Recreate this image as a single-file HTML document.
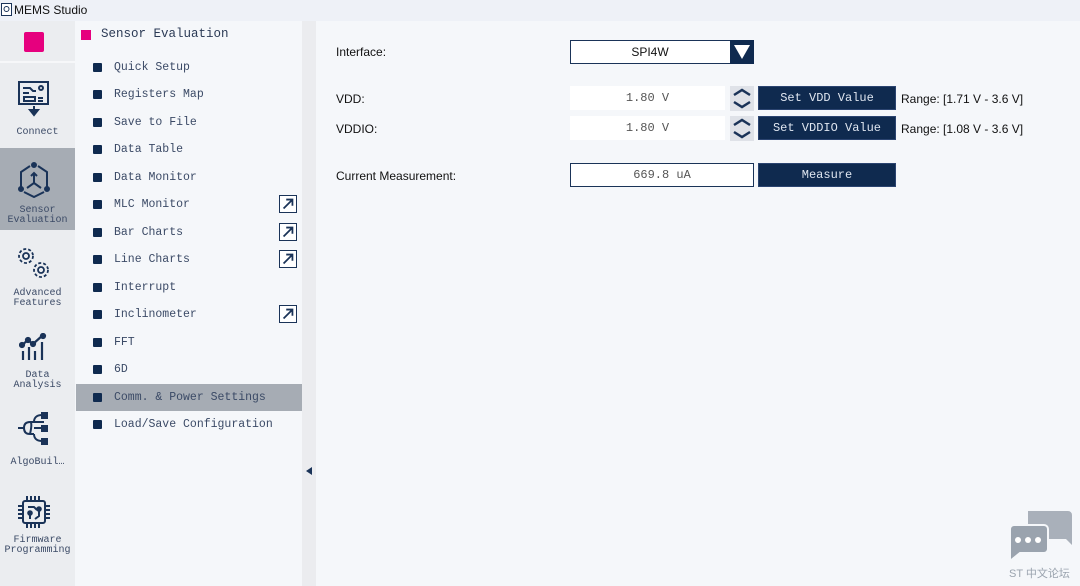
<!DOCTYPE html>
<html><head><meta charset="utf-8"><style>
*{margin:0;padding:0;box-sizing:border-box}
body{width:1080px;height:586px;overflow:hidden;background:#f5f7fa;font-family:"Liberation Sans",sans-serif;position:relative}
.abs{position:absolute}
.title{left:0;top:0;width:1080px;height:21px;background:#eef1f7;font-size:12px;color:#111;}
.rail{left:0;top:21px;width:75px;height:565px;background:#ebedf0}
.mono{font-family:"Liberation Mono","Noto Sans CJK SC",monospace}
.rl{position:absolute;left:0;width:75px;text-align:center;font-size:10px;line-height:10px;color:#3b4a66}
.mid{left:76px;top:21px;width:226px;height:565px;background:#f5f7fa}
.item{position:absolute;left:76px;width:226px;height:27px;font-size:11.5px;color:#3b4a66;line-height:27px}
.item .b{position:absolute;left:17px;top:9px;width:9px;height:9px;background:#0f2a4f;border-radius:1px}
.item span{position:absolute;left:38px}
.ext{position:absolute;left:203px;top:4px;width:18px;height:18px;border:1.5px solid #1a3358;background:#fff}
.div{left:302px;top:21px;width:14px;height:565px;background:#ebecef}
.lab{position:absolute;font-size:12px;color:#111}
.inp{position:absolute;background:#fff;font-size:12px;color:#555;text-align:center}
.btn{position:absolute;background:#0f2a4f;color:#dfe6f0;font-size:12px;text-align:center;border:1px solid #2b4470}
</style></head><body>
<div class="abs title"><svg class="abs" style="left:1px;top:3px" width="11" height="13"><rect x="0.5" y="0.5" width="10" height="12" fill="#fff" stroke="#1a3358"/><circle cx="5.5" cy="6" r="2.5" fill="none" stroke="#1a3358"/></svg><span class="abs" style="left:14px;top:3px">MEMS Studio</span></div>
<div class="abs rail"></div>
<div class="abs" style="left:0;top:61px;width:75px;height:2px;background:#f6f7f9"></div>
<div class="abs" style="left:24px;top:32px;width:20px;height:20px;background:#e6007e;border-radius:2px"></div>
<svg class="abs" style="left:17px;top:80px" width="34" height="38" viewBox="0 0 34 38" fill="none" stroke="#1a3358" stroke-width="2"><rect x="2" y="2" width="29" height="22"/><path d="M6 8h7l3 3h3M6 13h6M7 17h11v4H7zM21 18h5M21 21h5"/><circle cx="24" cy="8" r="2"/><path d="M17 26v6" /><path d="M13 30l4 5 4-5z" fill="#1a3358"/></svg>
<div class="rl mono" style="top:128px">Connect</div>
<div class="abs" style="left:0;top:148px;width:75px;height:82px;background:#a6acb4"></div>
<svg class="abs" style="left:16px;top:162px" width="36" height="36" viewBox="0 0 36 36" fill="none" stroke="#1a3358" stroke-width="2"><path d="M14 4L5 10v15M22 4l9 6v15M8 30l10 5 10-5"/><path d="M18 12v9l-7 5M18 21l7 5"/><circle cx="18" cy="3" r="2" fill="#1a3358"/><circle cx="5" cy="27" r="2" fill="#1a3358"/><circle cx="31" cy="27" r="2" fill="#1a3358"/><path d="M15 14l3-3 3 3" /></svg>
<div class="rl mono" style="top:206px">Sensor<br>Evaluation</div>
<svg class="abs" style="left:15px;top:246px" width="36" height="34" viewBox="0 0 36 34" fill="none" stroke="#1a3358" stroke-width="1.8"><circle cx="11" cy="10" r="7" stroke-dasharray="3 2"/><circle cx="11" cy="10" r="3"/><circle cx="26" cy="24" r="7" stroke-dasharray="3 2"/><circle cx="26" cy="24" r="3"/></svg>
<div class="rl mono" style="top:289px">Advanced<br>Features</div>
<svg class="abs" style="left:19px;top:333px" width="30" height="30" viewBox="0 0 30 30" fill="none" stroke="#1a3358" stroke-width="2.2"><path d="M3 12l6-5 5 4 10-9"/><circle cx="3" cy="12" r="2" fill="#1a3358"/><circle cx="9" cy="7" r="2" fill="#1a3358"/><circle cx="14" cy="11" r="2" fill="#1a3358"/><circle cx="24" cy="3" r="2" fill="#1a3358"/><path d="M4 18v9M10 14v13M16 18v9M23 9v18"/></svg>
<div class="rl mono" style="top:371px">Data<br>Analysis</div>
<svg class="abs" style="left:16px;top:411px" width="36" height="36" viewBox="0 0 36 36" fill="none" stroke="#1a3358" stroke-width="2"><path d="M2 17h6M8 17c0-5 3-6 6-6s0 12 0 12c-3 0-6-1-6-6M14 11h4M14 23h4M18 11c0-6 5-7 8-7M18 11v0h10M18 23c0 6 5 7 8 7M18 17h10"/><rect x="26" y="2" width="5" height="5" fill="#1a3358"/><rect x="26" y="15" width="5" height="5" fill="#1a3358"/><rect x="26" y="28" width="5" height="5" fill="#1a3358"/></svg>
<div class="rl mono" style="top:458px">AlgoBuil…</div>
<svg class="abs" style="left:17px;top:495px" width="34" height="34" viewBox="0 0 34 34" fill="none" stroke="#1a3358" stroke-width="2"><rect x="6" y="6" width="22" height="22" rx="2"/><path d="M10 1v5M14 1v5M18 1v5M22 1v5M10 28v5M14 28v5M18 28v5M22 28v5M1 11h5M1 15h5M1 19h5M1 23h5M28 11h5M28 15h5M28 19h5M28 23h5M11 12h6l3 3M13 18v6M22 14v7l-4 3"/><circle cx="13" cy="18" r="1.8" fill="#1a3358"/><circle cx="22" cy="14" r="1.8" fill="#1a3358"/></svg>
<div class="rl mono" style="top:536px">Firmware<br>Programming</div>
<div class="abs mid"></div>
<div class="abs" style="left:81px;top:30px;width:10px;height:10px;background:#e6007e"></div>
<div class="abs mono" style="left:101px;top:27px;font-size:12.5px;color:#2b3a55">Sensor Evaluation</div>
<div class="item mono" style="top:54px"><i class="b"></i><span>Quick Setup</span></div>
<div class="item mono" style="top:81px"><i class="b"></i><span>Registers Map</span></div>
<div class="item mono" style="top:109px"><i class="b"></i><span>Save to File</span></div>
<div class="item mono" style="top:136px"><i class="b"></i><span>Data Table</span></div>
<div class="item mono" style="top:164px"><i class="b"></i><span>Data Monitor</span></div>
<div class="item mono" style="top:191px"><i class="b"></i><span>MLC Monitor</span><svg class="ext" viewBox="0 0 18 18"><path d="M4 14L13 5M7 4h7v7" stroke="#1a3358" stroke-width="2" fill="none"/></svg></div>
<div class="item mono" style="top:219px"><i class="b"></i><span>Bar Charts</span><svg class="ext" viewBox="0 0 18 18"><path d="M4 14L13 5M7 4h7v7" stroke="#1a3358" stroke-width="2" fill="none"/></svg></div>
<div class="item mono" style="top:246px"><i class="b"></i><span>Line Charts</span><svg class="ext" viewBox="0 0 18 18"><path d="M4 14L13 5M7 4h7v7" stroke="#1a3358" stroke-width="2" fill="none"/></svg></div>
<div class="item mono" style="top:274px"><i class="b"></i><span>Interrupt</span></div>
<div class="item mono" style="top:301px"><i class="b"></i><span>Inclinometer</span><svg class="ext" viewBox="0 0 18 18"><path d="M4 14L13 5M7 4h7v7" stroke="#1a3358" stroke-width="2" fill="none"/></svg></div>
<div class="item mono" style="top:329px"><i class="b"></i><span>FFT</span></div>
<div class="item mono" style="top:356px"><i class="b"></i><span>6D</span></div>
<div class="item mono" style="top:384px;background:#a6acb4"><i class="b"></i><span>Comm. &amp; Power Settings</span></div>
<div class="item mono" style="top:411px"><i class="b"></i><span>Load/Save Configuration</span></div>
<div class="abs div"></div>
<div class="abs" style="left:306px;top:467px;width:0;height:0;border-top:4px solid transparent;border-bottom:4px solid transparent;border-right:6px solid #1a3358"></div>

<div class="lab" style="left:336px;top:45px">Interface:</div>
<div class="abs" style="left:570px;top:40px;width:184px;height:24px;background:#fff;border:1px solid #1a3358"></div>
<div class="abs" style="left:570px;top:45px;width:160px;text-align:center;font-size:12px;color:#111">SPI4W</div>
<div class="abs" style="left:730px;top:40px;width:24px;height:24px;background:#0f2a4f"></div>
<div class="abs" style="left:734px;top:45px;border-left:8px solid transparent;border-right:8px solid transparent;border-top:14px solid #fff"></div>

<div class="lab" style="left:336px;top:92px">VDD:</div>
<div class="inp mono" style="left:570px;top:86px;width:155px;height:24px;line-height:24px">1.80 V</div>
<svg class="abs" style="left:730px;top:86px" width="24" height="25"><rect width="24" height="25" fill="#dfe2e8"/><path d="M4 9l8-5 8 5M4 16l8 5 8-5" stroke="#1a3358" stroke-width="2.5" fill="none"/></svg>
<div class="btn mono" style="left:758px;top:86px;width:138px;height:24px;line-height:22px">Set VDD Value</div>
<div class="lab" style="left:901px;top:92px">Range: [1.71 V - 3.6 V]</div>

<div class="lab" style="left:336px;top:122px">VDDIO:</div>
<div class="inp mono" style="left:570px;top:116px;width:155px;height:24px;line-height:24px">1.80 V</div>
<svg class="abs" style="left:730px;top:116px" width="24" height="25"><rect width="24" height="25" fill="#dfe2e8"/><path d="M4 9l8-5 8 5M4 16l8 5 8-5" stroke="#1a3358" stroke-width="2.5" fill="none"/></svg>
<div class="btn mono" style="left:758px;top:116px;width:138px;height:24px;line-height:22px">Set VDDIO Value</div>
<div class="lab" style="left:901px;top:122px">Range: [1.08 V - 3.6 V]</div>

<div class="lab" style="left:336px;top:169px">Current Measurement:</div>
<div class="inp mono" style="left:570px;top:163px;width:184px;height:24px;line-height:22px;border:1px solid #1a3358">669.8 uA</div>
<div class="btn mono" style="left:758px;top:163px;width:138px;height:24px;line-height:22px">Measure</div>

<svg class="abs" style="left:1006px;top:509px" width="68" height="54" viewBox="0 0 68 54"><path d="M22 2h40a4 4 0 0 1 4 4v30l-6-6H22z" fill="#a9b0ba"/><path d="M4 16h34a4 4 0 0 1 4 4v20a4 4 0 0 1-4 4H14l-10 8V20a4 4 0 0 1 4-4z" fill="#9aa3ae" stroke="#f5f7fa" stroke-width="2"/><circle cx="12" cy="31" r="3" fill="#fff"/><circle cx="22" cy="31" r="3" fill="#fff"/><circle cx="32" cy="31" r="3" fill="#fff"/></svg>
<div class="abs" style="left:1009px;top:565px;font-size:11px;color:#9aa3ae;font-family:'Liberation Sans','Noto Sans CJK SC',sans-serif">ST 中文论坛</div>
</body></html>
